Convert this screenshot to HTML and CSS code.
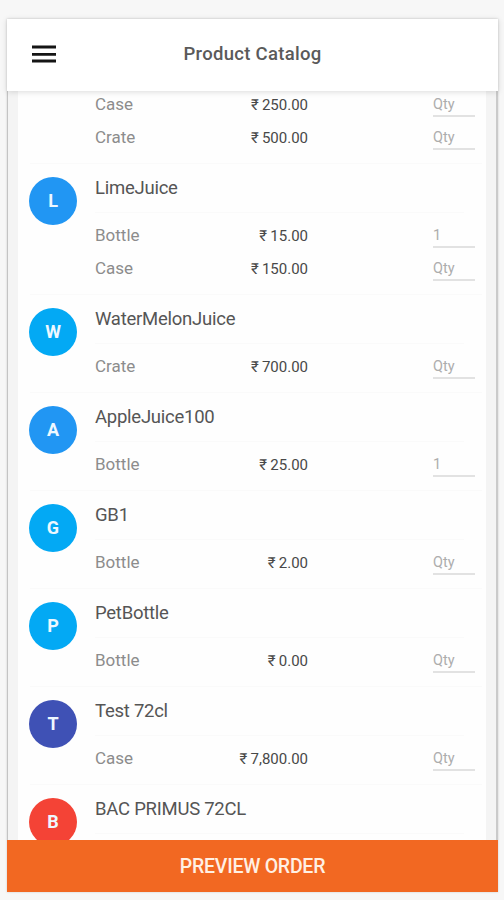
FILE: index.html
```html
<!DOCTYPE html>
<html lang="en">
<head>
<meta charset="utf-8">
<title>Product Catalog</title>
<link rel="stylesheet" href="styles.css">
</head>
<body>
<div class="app">
  <header class="bar">
    <svg class="menu" width="26" height="20" viewBox="0 0 26 20"><path d="M1 3H25M1 10.3H25M1 17H25" stroke="#151515" stroke-width="2.8"/></svg>
    <h1 class="title">Product Catalog</h1>
  </header>
  <main class="content">
    <div class="list">
      <section class="item partial">
        <div class="rows">
          <div class="row"><span class="unit">Case</span><span class="price">₹ 250.00</span><span class="qty">Qty</span></div>
          <div class="row"><span class="unit">Crate</span><span class="price">₹ 500.00</span><span class="qty">Qty</span></div>
        </div>
      </section>
      <section class="item">
        <div class="avatar blue">L</div>
        <h2 class="name">LimeJuice</h2>
        <div class="rows">
          <div class="row"><span class="unit">Bottle</span><span class="price">₹ 15.00</span><span class="qty">1</span></div>
          <div class="row"><span class="unit">Case</span><span class="price">₹ 150.00</span><span class="qty">Qty</span></div>
        </div>
      </section>
      <section class="item">
        <div class="avatar sky">W</div>
        <h2 class="name">WaterMelonJuice</h2>
        <div class="rows">
          <div class="row"><span class="unit">Crate</span><span class="price">₹ 700.00</span><span class="qty">Qty</span></div>
        </div>
      </section>
      <section class="item">
        <div class="avatar blue">A</div>
        <h2 class="name">AppleJuice100</h2>
        <div class="rows">
          <div class="row"><span class="unit">Bottle</span><span class="price">₹ 25.00</span><span class="qty">1</span></div>
        </div>
      </section>
      <section class="item">
        <div class="avatar sky">G</div>
        <h2 class="name">GB1</h2>
        <div class="rows">
          <div class="row"><span class="unit">Bottle</span><span class="price">₹ 2.00</span><span class="qty">Qty</span></div>
        </div>
      </section>
      <section class="item">
        <div class="avatar sky">P</div>
        <h2 class="name">PetBottle</h2>
        <div class="rows">
          <div class="row"><span class="unit">Bottle</span><span class="price">₹ 0.00</span><span class="qty">Qty</span></div>
        </div>
      </section>
      <section class="item">
        <div class="avatar indigo">T</div>
        <h2 class="name">Test 72cl</h2>
        <div class="rows">
          <div class="row"><span class="unit">Case</span><span class="price">₹ 7,800.00</span><span class="qty">Qty</span></div>
        </div>
      </section>
      <section class="item">
        <div class="avatar red">B</div>
        <h2 class="name">BAC PRIMUS 72CL</h2>
      </section>
    </div>
  </main>
  <button class="preview">PREVIEW ORDER</button>
</div>
</body>
</html>
```
FILE: styles.css
```css
* { box-sizing: border-box; }
body {
  margin: 0;
  height: 900px;
  padding: 19px 6px 8px 7px;
  overflow: hidden;
  background: #f7f7f7;
  font-family: Roboto, sans-serif;
}
.app {
  display: flex;
  flex-direction: column;
  height: 873px;
  box-shadow: 0 0 2px #ccc;
}
.bar {
  position: relative;
  z-index: 1;
  display: grid;
  grid-template-columns: 74px 1fr 74px;
  align-items: center;
  flex: 0 0 72px;
  padding-bottom: 3px;
  background: #fff;
  box-shadow: 0 1px 6px rgba(0, 0, 0, .14);
}
.menu { margin-left: 24px; }
.title {
  margin: 0;
  text-align: center;
  font-size: 18.5px;
  font-weight: 500;
  letter-spacing: .3px;
  color: #5a5a5a;
}
.content {
  flex: 1;
  min-height: 0;
  overflow: hidden;
  padding: 0 10px;
  background: #f4f4f4;
  border-left: 1px solid #c4c4c4;
  border-right: 2px solid #cacaca;
}
.list {
  height: 100%;
  overflow: hidden;
  background: #fefefe;
}
.item {
  display: grid;
  grid-template-columns: 77px 1fr;
  grid-template-rows: 49px auto;
  margin: 0 1px 0 0;
  padding-bottom: 10px;
  background: linear-gradient(#fafafa, #fafafa) 12px 100% / 452px 1px no-repeat;
}
.partial {
  grid-template-rows: auto;
  margin-top: -3px;
}
.avatar {
  grid-row: 1 / 3;
  width: 48px;
  height: 48px;
  margin: 13px 0 0 11px;
  border-radius: 50%;
  line-height: 47px;
  text-align: center;
  font-size: 18px;
  font-weight: 700;
  color: #eef8ff;
}
.blue { background: #2196f3; }
.sky { background: #03a9f4; }
.indigo { background: #3f51b5; }
.red { background: #f44336; }
.name {
  grid-column: 2;
  margin: 0 21px 0 0;
  border-bottom: 1px solid #fafafa;
  line-height: 49px;
  font-size: 18.5px;
  font-weight: 400;
  letter-spacing: -.25px;
  color: #555;
}
.rows {
  grid-column: 2;
  padding-top: 6px;
}
.partial .rows { padding-top: 0; }
.row {
  display: grid;
  grid-template-columns: 213px 125px 42px;
  align-items: center;
  height: 33px;
}
.row > * { grid-row: 1; }
.unit {
  grid-column: 1;
  margin-top: -2px;
  font-size: 17px;
  color: #8c8c8c;
}
.price {
  grid-column: 1;
  justify-self: end;
  font-size: 15px;
  word-spacing: -.5px;
  color: #484848;
}
.qty {
  grid-column: 3;
  height: 24px;
  border-bottom: 2px solid #e2e2e2;
  line-height: 24px;
  font-size: 14.5px;
  color: #adadad;
}
.preview {
  flex: 0 0 52px;
  border: 0;
  background: #f26822;
  font: 500 19.5px Roboto, sans-serif;
  letter-spacing: -.25px;
  color: #fff0e4;
}
```
